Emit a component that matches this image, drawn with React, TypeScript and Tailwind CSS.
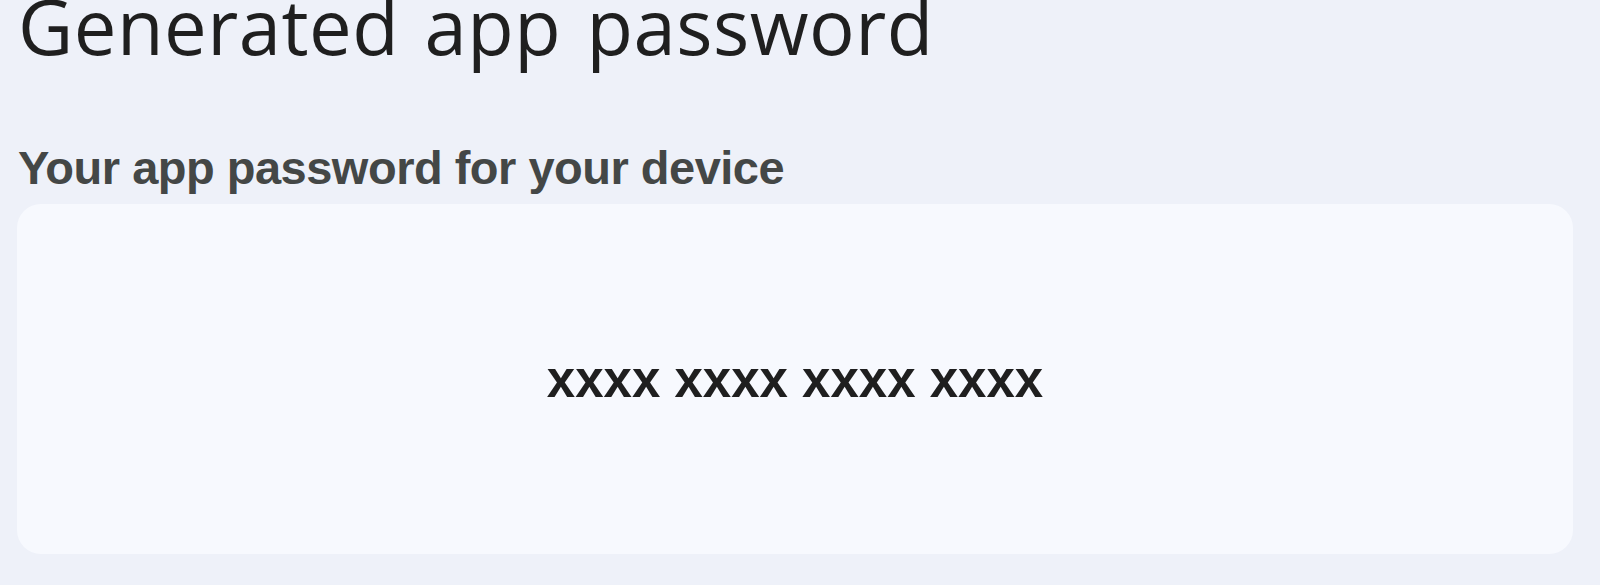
export default function App() {
  return (
    <div className="min-h-[585px] w-full overflow-hidden bg-[#eef1f9] pl-[17px] pr-[27px]">
      <h1 className="mt-[-12px] ml-[1px] whitespace-nowrap text-[76px] leading-none font-normal tracking-[0.5px] [word-spacing:5px] text-[#1f1f1f] font-['Open_Sans',sans-serif]">
        Generated app password
      </h1>
      <h2 className="mt-[80px] ml-[1px] whitespace-nowrap text-[47px] leading-none font-bold tracking-[-0.5px] text-[#444746] font-['Liberation_Sans',Arial,sans-serif]">
        Your app password for your device
      </h2>
      <div className="mt-[13px] flex h-[350px] items-center justify-center rounded-[24px] bg-[#f7f9fe]">
        <span className="text-[51px] leading-none font-bold text-[#1f1f1f] font-['Liberation_Sans',Arial,sans-serif]">
          xxxx xxxx xxxx xxxx
        </span>
      </div>
    </div>
  );
}
